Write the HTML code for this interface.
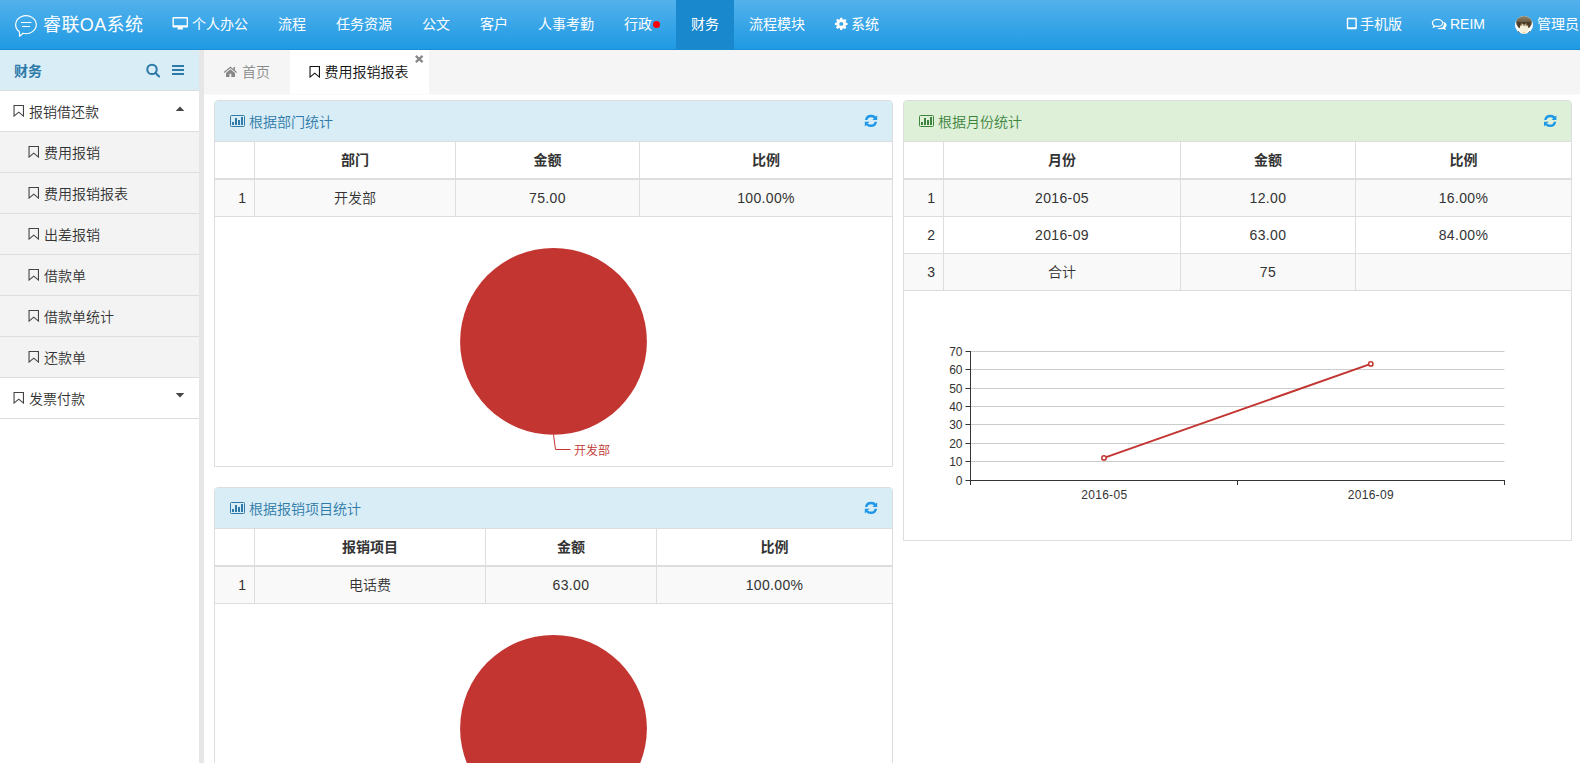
<!DOCTYPE html>
<html lang="zh-CN">
<head>
<meta charset="utf-8">
<title>睿联OA系统</title>
<style>
*{box-sizing:border-box;}
html,body{margin:0;padding:0;width:1580px;height:763px;overflow:hidden;background:#fff;}
body{font-family:"Liberation Sans","Noto Sans CJK SC",sans-serif;font-size:14px;color:#333;line-height:20px;position:relative;font-weight:350;}
svg{display:block;}
.abs{position:absolute;}
#hd{position:absolute;left:0;top:0;width:1580px;height:50px;background:linear-gradient(#53b1ec,#1f9ae3);border-bottom:1px solid #1a8cd2;color:#fff;}
#hd .t{position:absolute;top:0;height:49px;line-height:49px;font-size:14px;white-space:nowrap;color:#fff;font-weight:400;}
#logo{font-weight:400;position:absolute;left:43px;top:0;height:49px;line-height:51px;font-size:18px;white-space:nowrap;letter-spacing:.4px;}
#act{position:absolute;left:676px;top:0;width:58px;height:49px;background:#1a88cd;}
#sb{position:absolute;left:0;top:50px;width:199px;height:713px;background:#fff;}
#sbt{position:absolute;left:0;top:0;width:199px;height:41px;background:#d9edf7;border-bottom:1px solid #ddd;color:#2c7aa8;font-weight:bold;line-height:43px;padding-left:14px;}
.mi{position:absolute;left:0;width:199px;height:41px;border-bottom:1px solid #ddd;line-height:42px;white-space:nowrap;}
.mi.sub{background:#f3f3f3;}
.mi span{position:absolute;top:0;}
#sp{position:absolute;left:199px;top:50px;width:5px;height:713px;background:#e6e6e6;}
#tabs{position:absolute;left:204px;top:50px;width:1376px;height:45px;background:#f5f5f5;border-bottom:1px solid #fafafa;}
#tab2{position:absolute;left:86px;top:0;width:139px;height:44px;background:#fff;}
#tabs .tx{position:absolute;top:0;line-height:45px;white-space:nowrap;}
.pn{position:absolute;border:1px solid #ddd;background:#fff;}
.ph{position:absolute;left:0;top:0;right:0;height:41px;border-bottom:1px solid #ddd;line-height:42px;white-space:nowrap;}
.ph.info{background:#d9edf7;color:#2f7aa8;}
.ph.succ{background:#dff0d8;color:#3c843e;}
.ph span{position:absolute;left:34px;top:0;}
.r{position:absolute;left:0;right:0;height:36px;}
.r.h{font-weight:bold;}
.r.o{background:#f9f9f9;}
.c{position:absolute;top:0;height:36px;line-height:37px;text-align:center;white-space:nowrap;}
.c.i{text-align:right;padding-right:8px;}
.c.n{letter-spacing:.35px;}
.hl{position:absolute;left:0;right:0;background:#ddd;}
.vl{position:absolute;width:1px;background:#ddd;}
.ic{position:absolute;left:15px;top:14px;}
.rf{position:absolute;right:14.600px;top:13.800px;}
</style>
</head>
<body>
<div id="hd">
  <div id="act"></div>
  <svg class="abs" style="left:14px;top:14px" width="24" height="24" viewBox="0 0 24 24" fill="none" stroke="#fff" stroke-width="1.150"><path stroke-linejoin="round" d="M8.990 19.300A10.300 9 0 1 0 5.380 17.600L5.600 22.300z"/><path d="M6.900 8.450H17.400M8 12.450H16" stroke-width="1.050"/></svg>
  <div id="logo">睿联OA系统</div>
  <svg class="abs" style="left:172px;top:17px" width="16" height="13" viewBox="0 0 16 13" ><g transform="translate(0.5 0) scale(0.9118 0.9286)"><path fill="#fff" d="M1.200 0h14.600c.7 0 1.200.5 1.200 1.200v9c0 .7-.5 1.200-1.200 1.200H11l.5 1.400c.1.300 0 .6-.4.600H5.900c-.4 0-.5-.3-.4-.6l.5-1.400H1.200C.5 11.400 0 10.900 0 10.200v-9C0 .5.500 0 1.200 0zm.3 1.500v7.400h14V1.500z"/></g></svg>
  <div class="t" style="left:192px">个人办公</div>
  <div class="t" style="left:278px">流程</div>
  <div class="t" style="left:336px">任务资源</div>
  <div class="t" style="left:422px">公文</div>
  <div class="t" style="left:480px">客户</div>
  <div class="t" style="left:538px">人事考勤</div>
  <div class="t" style="left:624px">行政</div>
  <div class="abs" style="left:653px;top:21px;width:7px;height:7px;border-radius:50%;background:#f00"></div>
  <div class="t" style="left:691px">财务</div>
  <div class="t" style="left:749px">流程模块</div>
  <svg class="abs" style="left:834px;top:17px" width="14" height="13" viewBox="0 0 14 13" ><g transform="translate(0.9 0.8) scale(0.5292 0.5083)"><path fill="#fff" fill-rule="evenodd" d="M10 0h4l.6 3.200 1.900.8 2.700-1.800 2.800 2.800L20.200 7.700l.8 1.900 3 .6v4l-3.200.6-.8 1.900 1.800 2.700-2.800 2.800-2.700-1.800-1.900.8L14 24h-4l-.6-3.200-1.900-.8-2.700 1.800L2 19l1.800-2.700-.8-1.900L0 14v-4l3.200-.6.800-1.900L2.200 4.800 5 2l2.700 1.800 1.900-.8zM12 8.200a3.800 3.800 0 100 7.600 3.800 3.800 0 000-7.600z"/></g></svg>
  <div class="t" style="left:851px">系统</div>
  <svg class="abs" style="left:1346px;top:17px" width="11" height="13" viewBox="0 0 11 13" ><g transform="translate(0.8 0.8) scale(1.0 0.9913)"><path fill="#fff" fill-rule="evenodd" d="M1.300 0h7.400C9.500 0 10 .5 10 1.300v8.900c0 .8-.5 1.300-1.300 1.300H1.300C.5 11.500 0 11 0 10.200V1.300C0 .5.500 0 1.300 0zM1.400 1.400v8.200h7.200V1.400z"/></g></svg>
  <div class="t" style="left:1360px">手机版</div>
  <svg class="abs" style="left:1431px;top:18px" width="16" height="13" viewBox="0 0 16 13" ><g transform="translate(0.8 0.8)"><ellipse cx="5.750" cy="4.150" rx="5.100" ry="3.500" fill="none" stroke="#fff" stroke-width="1.300"/><path fill="#fff" d="M1.500 6.800L.8 9.300l3.200-1.200zM11.400 2.900c2 .5 3.400 1.800 3.400 3.400 0 1.100-.6 2-1.600 2.700l1.100 2.200-3-1.100c-.6.200-1.300.3-2 .3-1.700 0-3.100-.5-4-1.300 2.200.3 4.300-.1 5.600-1 1.300-1 1.700-3 .5-5.200z"/></g></svg>
  <div class="t" style="left:1450px">REIM</div>
  <svg class="abs" style="left:1515px;top:16px" width="18" height="18" viewBox="0 0 18 18"><defs><clipPath id="av"><circle cx="9" cy="9" r="9"/></clipPath><linearGradient id="hg" x1="0" y1="0" x2="0" y2="1"><stop offset="0" stop-color="#a39170"/><stop offset=".45" stop-color="#6e604a"/><stop offset="1" stop-color="#473a2b"/></linearGradient></defs><filter id="bl" x="-10%" y="-10%" width="120%" height="120%"><feGaussianBlur stdDeviation=".45"/></filter><g clip-path="url(#av)"><rect width="18" height="18" fill="#fff"/><g filter="url(#bl)"><ellipse cx="9" cy="6" rx="8" ry="7.500" fill="url(#hg)"/><ellipse cx="9" cy="12.500" rx="4.600" ry="4.600" fill="#f6efdc"/><path d="M2 6c1 2 1.500 4 2 6.500l1.500-3.500 1 1 1-4 1.500 4.500 1.500-4 1 3.500 1.500-1 1 3c.5-2 1-4 1.500-6z" fill="#4a3a28"/><path d="M6.500 6l-1.300 4h1.600zM11 6.500l-.8 3.500 2 .3z" fill="#b59a60"/><path d="M3 15l2.500 2H3zM15 15l-2.500 2H15z" fill="#221a14"/><path d="M6 17.500l3-1.500 3 1.500z" fill="#e8cfa0"/></g></g></svg>
  <div class="t" style="left:1537px">管理员</div>
</div>
<div id="sb">
  <div id="sbt">财务</div>
  <svg class="abs" style="left:146px;top:13px" width="15" height="15" viewBox="0 0 15 15" fill="none" stroke="#2c7aa8"><circle cx="6" cy="6.400" r="4.700" stroke-width="2"/><path d="M9.500 9.900l3.600 3.500" stroke-width="2.100" stroke-linecap="round"/></svg>
  <svg class="abs" style="left:172px;top:15px" width="12" height="10" viewBox="0 0 12 10"><path fill="#2c7aa8" d="M0 0h12v2H0zM0 4h12v2H0zM0 8h12v2H0z"/></svg>
  <div class="mi" style="top:41px"><svg class="abs" style="left:13px;top:14px" width="11" height="12" viewBox="0 0 11 12" ><g transform="translate(0.5 0)"><path fill="none" stroke="#444" stroke-width="1.100" d="M.55.550h9.400v10.500L5.250 7.100.55 11.050z"/></g></svg><span style="left:29px">报销借还款</span><svg class="abs" style="left:175px;top:15px" width="10" height="6" viewBox="0 0 10 6"><path fill="#444" d="M.7 5L5 .4l4.300 4.600z"/></svg></div>
  <div class="mi sub" style="top:82px"><svg class="abs" style="left:28px;top:14px" width="11" height="12" viewBox="0 0 11 12" ><g transform="translate(0.5 0)"><path fill="none" stroke="#444" stroke-width="1.100" d="M.55.550h9.400v10.500L5.250 7.100.55 11.050z"/></g></svg><span style="left:44px">费用报销</span></div>
  <div class="mi sub" style="top:123px"><svg class="abs" style="left:28px;top:14px" width="11" height="12" viewBox="0 0 11 12" ><g transform="translate(0.5 0)"><path fill="none" stroke="#444" stroke-width="1.100" d="M.55.550h9.400v10.500L5.250 7.100.55 11.050z"/></g></svg><span style="left:44px">费用报销报表</span></div>
  <div class="mi sub" style="top:164px"><svg class="abs" style="left:28px;top:14px" width="11" height="12" viewBox="0 0 11 12" ><g transform="translate(0.5 0)"><path fill="none" stroke="#444" stroke-width="1.100" d="M.55.550h9.400v10.500L5.250 7.100.55 11.050z"/></g></svg><span style="left:44px">出差报销</span></div>
  <div class="mi sub" style="top:205px"><svg class="abs" style="left:28px;top:14px" width="11" height="12" viewBox="0 0 11 12" ><g transform="translate(0.5 0)"><path fill="none" stroke="#444" stroke-width="1.100" d="M.55.550h9.400v10.500L5.250 7.100.55 11.050z"/></g></svg><span style="left:44px">借款单</span></div>
  <div class="mi sub" style="top:246px"><svg class="abs" style="left:28px;top:14px" width="11" height="12" viewBox="0 0 11 12" ><g transform="translate(0.5 0)"><path fill="none" stroke="#444" stroke-width="1.100" d="M.55.550h9.400v10.500L5.250 7.100.55 11.050z"/></g></svg><span style="left:44px">借款单统计</span></div>
  <div class="mi sub" style="top:287px"><svg class="abs" style="left:28px;top:14px" width="11" height="12" viewBox="0 0 11 12" ><g transform="translate(0.5 0)"><path fill="none" stroke="#444" stroke-width="1.100" d="M.55.550h9.400v10.500L5.250 7.100.55 11.050z"/></g></svg><span style="left:44px">还款单</span></div>
  <div class="mi" style="top:328px"><svg class="abs" style="left:13px;top:14px" width="11" height="12" viewBox="0 0 11 12" ><g transform="translate(0.5 0)"><path fill="none" stroke="#444" stroke-width="1.100" d="M.55.550h9.400v10.500L5.250 7.100.55 11.050z"/></g></svg><span style="left:29px">发票付款</span><svg class="abs" style="left:175px;top:15px" width="10" height="6" viewBox="0 0 10 6"><path fill="#444" d="M.7 0h8.600L5 4.600z"/></svg></div>
</div>
<div id="sp"></div>
<div id="tabs">
  <div id="tab2"></div>
  <svg class="abs" style="left:19px;top:16px" width="14" height="11" viewBox="0 0 14 11" ><g transform="translate(0.8 0.8)"><path fill="none" stroke="#888" stroke-width="1.200" d="M.3 5.700L6.600.5l6.300 5.200"/><path fill="#888" d="M9.700.3h1.500v3.400l-1.500-1.200zM2.200 10.200V6.200l4.400-3.700 4.600 3.700v4H7.500V7H5.700v3.200z"/></g></svg>
  <div class="tx" style="left:38px;color:#888">首页</div>
  <svg class="abs" style="left:105px;top:16px" width="11" height="12" viewBox="0 0 11 12" ><g transform="translate(0.5 0)"><path fill="none" stroke="#111" stroke-width="1.100" d="M.55.550h9.400v10.500L5.250 7.100.55 11.050z"/></g></svg>
  <div class="tx" style="left:120.500px;color:#111">费用报销报表</div>
  <svg class="abs" style="left:210px;top:4px" width="10" height="10" viewBox="0 0 10 10" ><g transform="translate(0.9 0.9) scale(1.0118 1.025)"><path stroke="#888" stroke-width="2.300" d="M.9.900l6.700 6.200M7.600.9L.9 7.100"/></g></svg>
</div>
<div class="pn" style="left:214px;top:100px;width:679px;height:367px;border-radius:4px 4px 0 0">
  <div class="ph info"><svg class="ic" width="15" height="12" viewBox="0 0 15 12"><rect x=".5" y=".5" width="14" height="11" rx="1" fill="none" stroke="#2f7aa8" stroke-width="1"/><path fill="#2f7aa8" d="M2 7h2v3H2zM5 3h2v7H5zM8 5h2v5H8zM11 2h2v8h-2z"/></svg><span>根据部门统计</span><svg class="abs" style="left:649px;top:13px" width="14" height="13" viewBox="0 0 14 13" ><g transform="translate(0.8 0.8)"><g fill="#1f98e8"><path d="M.16 5.250A6.100 6.100 0 0 1 12.240 5.250L9.800 5.250A3.700 3.700 0 0 0 2.600 5.250zM12.400.5V5.250H7.650z"/><path transform="rotate(180 6.200 6.100)" d="M.16 5.250A6.100 6.100 0 0 1 12.240 5.250L9.800 5.250A3.700 3.700 0 0 0 2.600 5.250zM12.400.5V5.250H7.650z"/></g></g></svg></div>
  <div class="r h" style="top:41px"><div class="c i" style="left:0px;width:39px"></div><div class="c" style="left:40px;width:200px">部门</div><div class="c" style="left:241px;width:183px">金额</div><div class="c" style="left:425px;width:252px">比例</div></div>
  <div class="hl" style="top:77px;height:2px"></div>
  <div class="r o" style="top:79px"><div class="c i" style="left:0px;width:39px">1</div><div class="c" style="left:40px;width:200px">开发部</div><div class="c n" style="left:241px;width:183px">75.00</div><div class="c n" style="left:425px;width:252px">100.00%</div></div>
  <div class="hl" style="top:115px;height:1px"></div>
  <div class="vl" style="left:39px;top:41px;height:74px"></div>
  <div class="vl" style="left:240px;top:41px;height:74px"></div>
  <div class="vl" style="left:424px;top:41px;height:74px"></div>
  <svg class="abs" style="left:0;top:116px" width="677" height="249" viewBox="0 0 677 249"><circle cx="338.500" cy="124.400" r="93.400" fill="#c23531"/><path d="M338.500 217.800L340.500 232.500H355.500" fill="none" stroke="#c23531" stroke-width="1"/><text x="359" y="238" font-size="12" fill="#c23531" font-family="'Liberation Sans','Noto Sans CJK SC',sans-serif">开发部</text></svg>
</div>
<div class="pn" style="left:214px;top:487px;width:679px;height:300px;border-radius:4px 4px 0 0">
  <div class="ph info"><svg class="ic" width="15" height="12" viewBox="0 0 15 12"><rect x=".5" y=".5" width="14" height="11" rx="1" fill="none" stroke="#2f7aa8" stroke-width="1"/><path fill="#2f7aa8" d="M2 7h2v3H2zM5 3h2v7H5zM8 5h2v5H8zM11 2h2v8h-2z"/></svg><span>根据报销项目统计</span><svg class="abs" style="left:649px;top:13px" width="14" height="13" viewBox="0 0 14 13" ><g transform="translate(0.8 0.8)"><g fill="#1f98e8"><path d="M.16 5.250A6.100 6.100 0 0 1 12.240 5.250L9.800 5.250A3.700 3.700 0 0 0 2.600 5.250zM12.400.5V5.250H7.650z"/><path transform="rotate(180 6.200 6.100)" d="M.16 5.250A6.100 6.100 0 0 1 12.240 5.250L9.800 5.250A3.700 3.700 0 0 0 2.600 5.250zM12.400.5V5.250H7.650z"/></g></g></svg></div>
  <div class="r h" style="top:41px"><div class="c i" style="left:0px;width:39px"></div><div class="c" style="left:40px;width:230px">报销项目</div><div class="c" style="left:271px;width:170px">金额</div><div class="c" style="left:442px;width:235px">比例</div></div>
  <div class="hl" style="top:77px;height:2px"></div>
  <div class="r o" style="top:79px"><div class="c i" style="left:0px;width:39px">1</div><div class="c" style="left:40px;width:230px">电话费</div><div class="c n" style="left:271px;width:170px">63.00</div><div class="c n" style="left:442px;width:235px">100.00%</div></div>
  <div class="hl" style="top:115px;height:1px"></div>
  <div class="vl" style="left:39px;top:41px;height:74px"></div>
  <div class="vl" style="left:270px;top:41px;height:74px"></div>
  <div class="vl" style="left:441px;top:41px;height:74px"></div>
  <svg class="abs" style="left:0;top:116px" width="677" height="249" viewBox="0 0 677 249"><circle cx="338.500" cy="124.400" r="93.400" fill="#c23531"/><path d="M338.500 217.800L340.500 232.500H355.500" fill="none" stroke="#c23531" stroke-width="1"/><text x="359" y="238" font-size="12" fill="#c23531" font-family="'Liberation Sans','Noto Sans CJK SC',sans-serif">电话费</text></svg>
</div>
<div class="pn" style="left:903px;top:100px;width:669px;height:441px;border-radius:4px 4px 0 0">
  <div class="ph succ"><svg class="ic" width="15" height="12" viewBox="0 0 15 12"><rect x=".5" y=".5" width="14" height="11" rx="1" fill="none" stroke="#3c843e" stroke-width="1"/><path fill="#3c843e" d="M2 7h2v3H2zM5 3h2v7H5zM8 5h2v5H8zM11 2h2v8h-2z"/></svg><span>根据月份统计</span><svg class="abs" style="left:640px;top:13px" width="13" height="13" viewBox="0 0 13 13" ><g transform="translate(0.0 0.8)"><g fill="#1f98e8"><path d="M.16 5.250A6.100 6.100 0 0 1 12.240 5.250L9.800 5.250A3.700 3.700 0 0 0 2.600 5.250zM12.400.5V5.250H7.650z"/><path transform="rotate(180 6.200 6.100)" d="M.16 5.250A6.100 6.100 0 0 1 12.240 5.250L9.800 5.250A3.700 3.700 0 0 0 2.600 5.250zM12.400.5V5.250H7.650z"/></g></g></svg></div>
  <div class="r h" style="top:41px"><div class="c i" style="left:0px;width:39px"></div><div class="c" style="left:40px;width:236px">月份</div><div class="c" style="left:277px;width:174px">金额</div><div class="c" style="left:452px;width:215px">比例</div></div>
  <div class="hl" style="top:77px;height:2px"></div>
  <div class="r o" style="top:79px"><div class="c i" style="left:0px;width:39px">1</div><div class="c n" style="left:40px;width:236px">2016-05</div><div class="c n" style="left:277px;width:174px">12.00</div><div class="c n" style="left:452px;width:215px">16.00%</div></div>
  <div class="hl" style="top:115px;height:1px"></div>
  <div class="r " style="top:116px"><div class="c i" style="left:0px;width:39px">2</div><div class="c n" style="left:40px;width:236px">2016-09</div><div class="c n" style="left:277px;width:174px">63.00</div><div class="c n" style="left:452px;width:215px">84.00%</div></div>
  <div class="hl" style="top:152px;height:1px"></div>
  <div class="r o" style="top:153px"><div class="c i" style="left:0px;width:39px">3</div><div class="c" style="left:40px;width:236px">合计</div><div class="c n" style="left:277px;width:174px">75</div><div class="c" style="left:452px;width:215px"></div></div>
  <div class="hl" style="top:189px;height:1px"></div>
  <div class="vl" style="left:39px;top:41px;height:148px"></div>
  <div class="vl" style="left:276px;top:41px;height:148px"></div>
  <div class="vl" style="left:451px;top:41px;height:148px"></div>
  <svg class="abs" style="left:0;top:190px" width="667" height="249" viewBox="0 0 667 249" font-size="12" fill="#333" font-family="'Liberation Sans','Noto Sans CJK SC',sans-serif"><path d="M66.5 170.5H600.5" stroke="#ccc" stroke-width="1"/>
  <path d="M66.5 152.5H600.5" stroke="#ccc" stroke-width="1"/>
  <path d="M66.5 133.5H600.5" stroke="#ccc" stroke-width="1"/>
  <path d="M66.5 115.5H600.5" stroke="#ccc" stroke-width="1"/>
  <path d="M66.5 97.5H600.5" stroke="#ccc" stroke-width="1"/>
  <path d="M66.5 78.5H600.5" stroke="#ccc" stroke-width="1"/>
  <path d="M66.5 60.5H600.5" stroke="#ccc" stroke-width="1"/>
  <path d="M61.5 189.5H66.5" stroke="#333" stroke-width="1"/>
  <text x="58.5" y="193.8" text-anchor="end">0</text>
  <path d="M61.5 170.5H66.5" stroke="#333" stroke-width="1"/>
  <text x="58.5" y="174.8" text-anchor="end">10</text>
  <path d="M61.5 152.5H66.5" stroke="#333" stroke-width="1"/>
  <text x="58.5" y="156.8" text-anchor="end">20</text>
  <path d="M61.5 133.5H66.5" stroke="#333" stroke-width="1"/>
  <text x="58.5" y="137.8" text-anchor="end">30</text>
  <path d="M61.5 115.5H66.5" stroke="#333" stroke-width="1"/>
  <text x="58.5" y="119.8" text-anchor="end">40</text>
  <path d="M61.5 97.5H66.5" stroke="#333" stroke-width="1"/>
  <text x="58.5" y="101.8" text-anchor="end">50</text>
  <path d="M61.5 78.5H66.5" stroke="#333" stroke-width="1"/>
  <text x="58.5" y="82.8" text-anchor="end">60</text>
  <path d="M61.5 60.5H66.5" stroke="#333" stroke-width="1"/>
  <text x="58.5" y="64.8" text-anchor="end">70</text>
  <path d="M66.5 60V194M66 189.5H601M333.5 189.5V194M600.5 189.5V194" stroke="#333" stroke-width="1" fill="none"/>
  <text x="200.3" y="208" text-anchor="middle" letter-spacing=".3">2016-05</text><text x="466.8" y="208" text-anchor="middle" letter-spacing=".3">2016-09</text>
  <path d="M200 166.9L466.8 72.9" stroke="#c23531" stroke-width="2" fill="none"/>
  <circle cx="200" cy="166.9" r="2.200" fill="#fff" stroke="#c23531" stroke-width="1.500"/><circle cx="466.8" cy="72.9" r="2.200" fill="#fff" stroke="#c23531" stroke-width="1.500"/></svg>
</div>
</body>
</html>
